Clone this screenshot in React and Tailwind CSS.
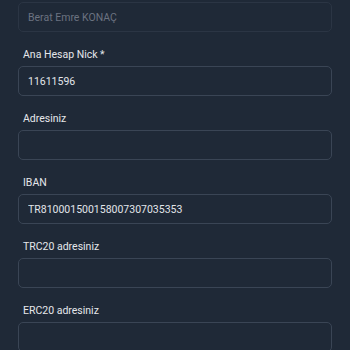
import { useState } from 'react';

const fields = [
  { label: 'Ana Hesap Nick *', value: '11611596' },
  { label: 'Adresiniz', value: '' },
  { label: 'IBAN', value: 'TR810001500158007307035353' },
  { label: 'TRC20 adresiniz', value: '' },
  { label: 'ERC20 adresiniz', value: '' },
];

function App() {
  const [values, setValues] = useState(fields.map((f) => f.value));

  return (
    <div className="min-h-screen bg-[#1f2937] px-[18px] pt-[2px] font-['Roboto',sans-serif] overflow-hidden">
      <input
        disabled
        value="Berat Emre KONAÇ"
        readOnly
        className="block w-full h-[30px] rounded-[5px] border border-[#2b3544] bg-transparent px-[9px] text-[10.5px] text-[#6b7280] outline-none"
      />
      {fields.map((f, i) => (
        <div key={f.label} className="mt-[15px]">
          <label className="block h-[16px] pl-[5px] text-[10.5px] leading-[16px] text-[#e5e7eb]">
            {f.label}
          </label>
          <input
            value={values[i]}
            onChange={(e) => {
              const next = [...values];
              next[i] = e.target.value;
              setValues(next);
            }}
            className="mt-[3px] block w-full h-[30px] rounded-[5px] border border-[#3a4555] bg-transparent px-[9px] pt-[1px] text-[10.5px] text-[#e2e5ea] outline-none"
          />
        </div>
      ))}
    </div>
  );
}

export default App;
